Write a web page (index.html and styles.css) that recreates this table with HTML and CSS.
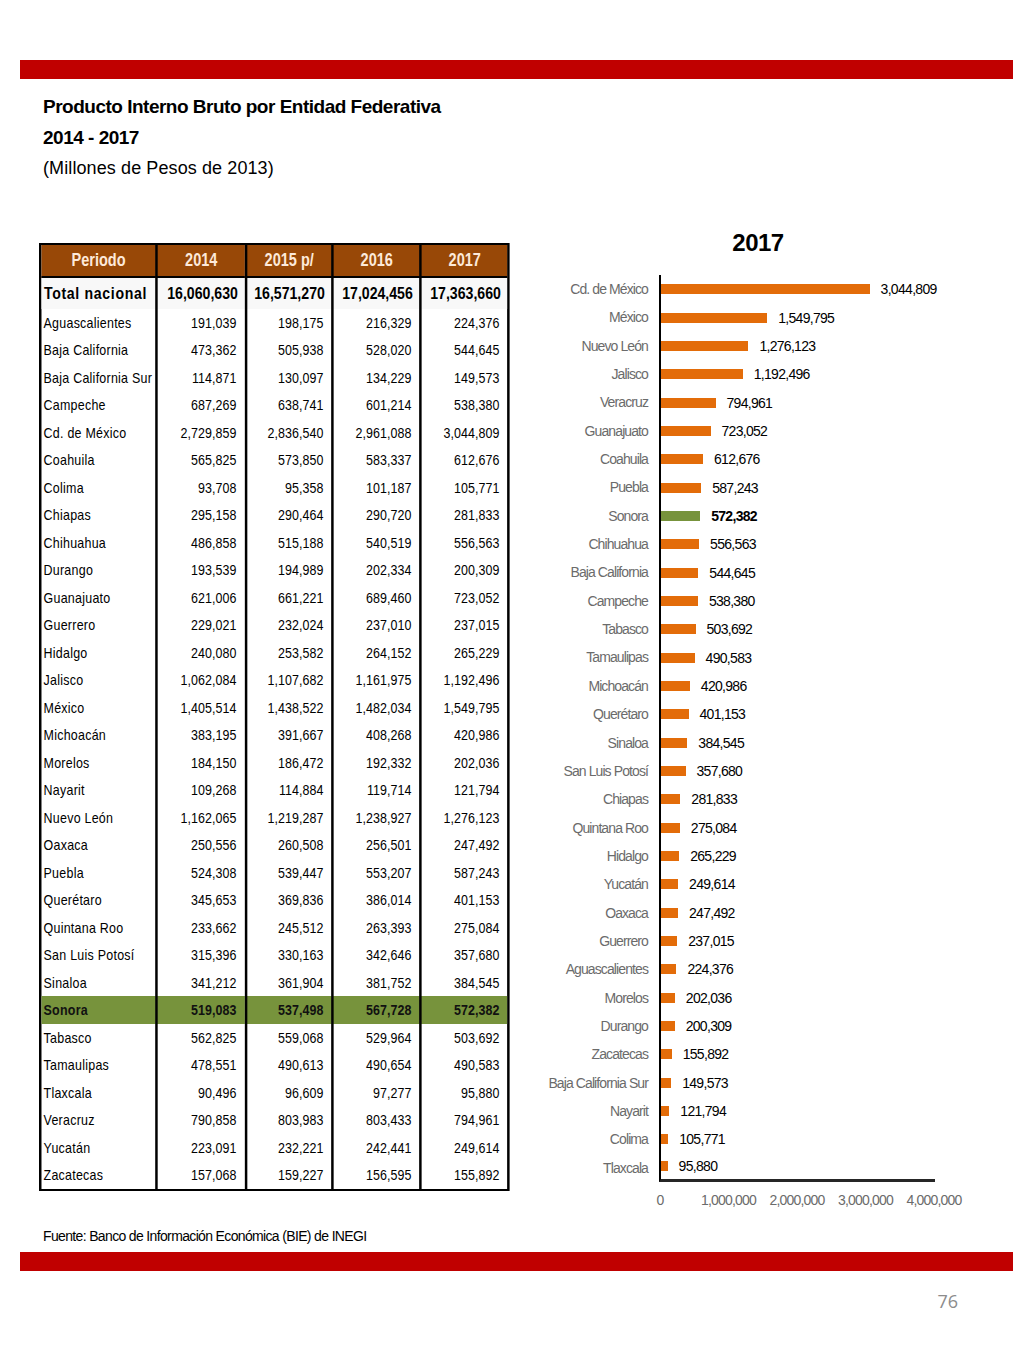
FILE: index.html
```html
<!DOCTYPE html>
<html lang="es">
<head>
<meta charset="utf-8">
<title>Producto Interno Bruto por Entidad Federativa</title>
<link rel="stylesheet" href="styles.css">
</head>
<body>
<div class="page">
  <div class="redbar"></div>
  <header class="head">
    <h1 class="t1">Producto Interno Bruto por Entidad Federativa</h1>
    <h2 class="t2">2014 - 2017</h2>
    <p class="t3">(Millones de Pesos de 2013)</p>
  </header>
  <main class="content">
    <div class="tbl-wrap">
    <table class="pib">
      <colgroup><col class="c0"><col class="c1"><col class="c2"><col class="c3"><col class="c4"></colgroup>
      <thead>
        <tr><th>Periodo</th><th>2014</th><th>2015 p/</th><th>2016</th><th>2017</th></tr>
      </thead>
      <tbody>
        <tr class="total"><td>Total nacional</td><td>16,060,630</td><td>16,571,270</td><td>17,024,456</td><td>17,363,660</td></tr>
        <tr><td>Aguascalientes</td><td>191,039</td><td>198,175</td><td>216,329</td><td>224,376</td></tr>
        <tr><td>Baja California</td><td>473,362</td><td>505,938</td><td>528,020</td><td>544,645</td></tr>
        <tr><td>Baja California Sur</td><td>114,871</td><td>130,097</td><td>134,229</td><td>149,573</td></tr>
        <tr><td>Campeche</td><td>687,269</td><td>638,741</td><td>601,214</td><td>538,380</td></tr>
        <tr><td>Cd. de México</td><td>2,729,859</td><td>2,836,540</td><td>2,961,088</td><td>3,044,809</td></tr>
        <tr><td>Coahuila</td><td>565,825</td><td>573,850</td><td>583,337</td><td>612,676</td></tr>
        <tr><td>Colima</td><td>93,708</td><td>95,358</td><td>101,187</td><td>105,771</td></tr>
        <tr><td>Chiapas</td><td>295,158</td><td>290,464</td><td>290,720</td><td>281,833</td></tr>
        <tr><td>Chihuahua</td><td>486,858</td><td>515,188</td><td>540,519</td><td>556,563</td></tr>
        <tr><td>Durango</td><td>193,539</td><td>194,989</td><td>202,334</td><td>200,309</td></tr>
        <tr><td>Guanajuato</td><td>621,006</td><td>661,221</td><td>689,460</td><td>723,052</td></tr>
        <tr><td>Guerrero</td><td>229,021</td><td>232,024</td><td>237,010</td><td>237,015</td></tr>
        <tr><td>Hidalgo</td><td>240,080</td><td>253,582</td><td>264,152</td><td>265,229</td></tr>
        <tr><td>Jalisco</td><td>1,062,084</td><td>1,107,682</td><td>1,161,975</td><td>1,192,496</td></tr>
        <tr><td>México</td><td>1,405,514</td><td>1,438,522</td><td>1,482,034</td><td>1,549,795</td></tr>
        <tr><td>Michoacán</td><td>383,195</td><td>391,667</td><td>408,268</td><td>420,986</td></tr>
        <tr><td>Morelos</td><td>184,150</td><td>186,472</td><td>192,332</td><td>202,036</td></tr>
        <tr><td>Nayarit</td><td>109,268</td><td>114,884</td><td>119,714</td><td>121,794</td></tr>
        <tr><td>Nuevo León</td><td>1,162,065</td><td>1,219,287</td><td>1,238,927</td><td>1,276,123</td></tr>
        <tr><td>Oaxaca</td><td>250,556</td><td>260,508</td><td>256,501</td><td>247,492</td></tr>
        <tr><td>Puebla</td><td>524,308</td><td>539,447</td><td>553,207</td><td>587,243</td></tr>
        <tr><td>Querétaro</td><td>345,653</td><td>369,836</td><td>386,014</td><td>401,153</td></tr>
        <tr><td>Quintana Roo</td><td>233,662</td><td>245,512</td><td>263,393</td><td>275,084</td></tr>
        <tr><td>San Luis Potosí</td><td>315,396</td><td>330,163</td><td>342,646</td><td>357,680</td></tr>
        <tr><td>Sinaloa</td><td>341,212</td><td>361,904</td><td>381,752</td><td>384,545</td></tr>
        <tr class="hl"><td>Sonora</td><td>519,083</td><td>537,498</td><td>567,728</td><td>572,382</td></tr>
        <tr><td>Tabasco</td><td>562,825</td><td>559,068</td><td>529,964</td><td>503,692</td></tr>
        <tr><td>Tamaulipas</td><td>478,551</td><td>490,613</td><td>490,654</td><td>490,583</td></tr>
        <tr><td>Tlaxcala</td><td>90,496</td><td>96,609</td><td>97,277</td><td>95,880</td></tr>
        <tr><td>Veracruz</td><td>790,858</td><td>803,983</td><td>803,433</td><td>794,961</td></tr>
        <tr><td>Yucatán</td><td>223,091</td><td>232,221</td><td>242,441</td><td>249,614</td></tr>
        <tr><td>Zacatecas</td><td>157,068</td><td>159,227</td><td>156,595</td><td>155,892</td></tr>
      </tbody>
    </table>
    </div>

    <section class="chart">
      <div class="chart-title">2017</div>
      <div class="plot">
        <div class="row"><span class="lbl">Cd. de México</span><span class="cell"><span class="bar" style="width:208.6px"></span><span class="val">3,044,809</span></span></div>
        <div class="row"><span class="lbl">México</span><span class="cell"><span class="bar" style="width:106.2px"></span><span class="val">1,549,795</span></span></div>
        <div class="row"><span class="lbl">Nuevo León</span><span class="cell"><span class="bar" style="width:87.4px"></span><span class="val">1,276,123</span></span></div>
        <div class="row"><span class="lbl">Jalisco</span><span class="cell"><span class="bar" style="width:81.7px"></span><span class="val">1,192,496</span></span></div>
        <div class="row"><span class="lbl">Veracruz</span><span class="cell"><span class="bar" style="width:54.5px"></span><span class="val">794,961</span></span></div>
        <div class="row"><span class="lbl">Guanajuato</span><span class="cell"><span class="bar" style="width:49.5px"></span><span class="val">723,052</span></span></div>
        <div class="row"><span class="lbl">Coahuila</span><span class="cell"><span class="bar" style="width:42.0px"></span><span class="val">612,676</span></span></div>
        <div class="row"><span class="lbl">Puebla</span><span class="cell"><span class="bar" style="width:40.2px"></span><span class="val">587,243</span></span></div>
        <div class="row hl"><span class="lbl">Sonora</span><span class="cell"><span class="bar" style="width:39.2px"></span><span class="val">572,382</span></span></div>
        <div class="row"><span class="lbl">Chihuahua</span><span class="cell"><span class="bar" style="width:38.1px"></span><span class="val">556,563</span></span></div>
        <div class="row"><span class="lbl">Baja California</span><span class="cell"><span class="bar" style="width:37.3px"></span><span class="val">544,645</span></span></div>
        <div class="row"><span class="lbl">Campeche</span><span class="cell"><span class="bar" style="width:36.9px"></span><span class="val">538,380</span></span></div>
        <div class="row"><span class="lbl">Tabasco</span><span class="cell"><span class="bar" style="width:34.5px"></span><span class="val">503,692</span></span></div>
        <div class="row"><span class="lbl">Tamaulipas</span><span class="cell"><span class="bar" style="width:33.6px"></span><span class="val">490,583</span></span></div>
        <div class="row"><span class="lbl">Michoacán</span><span class="cell"><span class="bar" style="width:28.8px"></span><span class="val">420,986</span></span></div>
        <div class="row"><span class="lbl">Querétaro</span><span class="cell"><span class="bar" style="width:27.5px"></span><span class="val">401,153</span></span></div>
        <div class="row"><span class="lbl">Sinaloa</span><span class="cell"><span class="bar" style="width:26.3px"></span><span class="val">384,545</span></span></div>
        <div class="row"><span class="lbl">San Luis Potosí</span><span class="cell"><span class="bar" style="width:24.5px"></span><span class="val">357,680</span></span></div>
        <div class="row"><span class="lbl">Chiapas</span><span class="cell"><span class="bar" style="width:19.3px"></span><span class="val">281,833</span></span></div>
        <div class="row"><span class="lbl">Quintana Roo</span><span class="cell"><span class="bar" style="width:18.8px"></span><span class="val">275,084</span></span></div>
        <div class="row"><span class="lbl">Hidalgo</span><span class="cell"><span class="bar" style="width:18.2px"></span><span class="val">265,229</span></span></div>
        <div class="row"><span class="lbl">Yucatán</span><span class="cell"><span class="bar" style="width:17.1px"></span><span class="val">249,614</span></span></div>
        <div class="row"><span class="lbl">Oaxaca</span><span class="cell"><span class="bar" style="width:17.0px"></span><span class="val">247,492</span></span></div>
        <div class="row"><span class="lbl">Guerrero</span><span class="cell"><span class="bar" style="width:16.2px"></span><span class="val">237,015</span></span></div>
        <div class="row"><span class="lbl">Aguascalientes</span><span class="cell"><span class="bar" style="width:15.4px"></span><span class="val">224,376</span></span></div>
        <div class="row"><span class="lbl">Morelos</span><span class="cell"><span class="bar" style="width:13.8px"></span><span class="val">202,036</span></span></div>
        <div class="row"><span class="lbl">Durango</span><span class="cell"><span class="bar" style="width:13.7px"></span><span class="val">200,309</span></span></div>
        <div class="row"><span class="lbl">Zacatecas</span><span class="cell"><span class="bar" style="width:10.7px"></span><span class="val">155,892</span></span></div>
        <div class="row"><span class="lbl">Baja California Sur</span><span class="cell"><span class="bar" style="width:10.2px"></span><span class="val">149,573</span></span></div>
        <div class="row"><span class="lbl">Nayarit</span><span class="cell"><span class="bar" style="width:8.3px"></span><span class="val">121,794</span></span></div>
        <div class="row"><span class="lbl">Colima</span><span class="cell"><span class="bar" style="width:7.2px"></span><span class="val">105,771</span></span></div>
        <div class="row last"><span class="lbl">Tlaxcala</span><span class="cell"><span class="bar" style="width:6.6px"></span><span class="val">95,880</span></span></div>
      </div>
      <div class="xaxis">
        <span>0</span><span>1,000,000</span><span>2,000,000</span><span>3,000,000</span><span>4,000,000</span>
      </div>
    </section>
  </main>
  <p class="source">Fuente: Banco de Información Económica (BIE) de INEGI</p>
  <div class="redbar"></div>
  <div class="pageno">76</div>
</div>
</body>
</html>
```

FILE: styles.css
```css
* { box-sizing: border-box; }
html, body { margin: 0; padding: 0; background: #fff; }
body {
  font-family: "Liberation Sans", Arial, sans-serif;
  color: #000;
}
.page { width: 1024px; height: 1365px; padding-top: 60px; }
.redbar { height: 19px; background: #c00000; margin: 0 11px 0 20px; }

.head { padding: 13px 0 0 43px; }
.t1, .t2 { margin: 0; font-size: 19px; font-weight: bold; line-height: 30.5px; letter-spacing: -0.5px; }
.t3 { margin: 0; font-size: 18px; font-weight: normal; line-height: 30.5px; letter-spacing: 0.1px; }

.content { display: flex; align-items: flex-start; margin-top: 59.5px; padding-left: 39px; }

/* table rendered with a horizontal squeeze to mimic a narrow face */
.tbl-wrap { width: 471px; flex: none; }
.pib {
  width: 561.5px;
  border-collapse: separate;
  border-spacing: 0;
  border-style: solid;
  border-color: #000;
  border-width: 2px 3px;
  table-layout: fixed;
  font-size: 15px;
  transform: scaleX(0.83);
  transform-origin: 0 0;
}
.c0 { width: 137.4px; }
.c1 { width: 107.2px; }
.c2 { width: 104.8px; }
.c3 { width: 106px; }
.c4 { width: 106.1px; }
.pib th {
  background: #984807;
  color: #fde9d9;
  font-size: 17.5px;
  font-weight: bold;
  height: 33px;
  padding: 0;
  text-align: center;
  border-bottom: 2px solid #000;
}
.pib th + th, .pib td + td { border-left: 3px solid #000; }
.pib td {
  padding: 0 9.5px 0 4px;
  text-align: right;
  white-space: nowrap;
  line-height: 18px;
  vertical-align: middle;
  letter-spacing: 0.1px;
}
.pib tbody tr:nth-child(even) td { height: 27px; }
.pib tbody tr:nth-child(odd) td { height: 28px; }
.pib td:first-child { text-align: left; padding-left: 2.5px; padding-right: 0; letter-spacing: 0.3px; }
.pib tbody tr.total td {
  height: 31px;
  font-size: 17px;
  font-weight: bold;
  padding-right: 8px;
  padding-left: 0;
  background: #f8f8f8;
  letter-spacing: 0;
}
.pib tbody tr.total td:first-child { padding-left: 3px; letter-spacing: 0.8px; }
.pib tr.hl td { background: #77933c; font-weight: bold; color: #111; }

.chart { width: 470px; }
.chart-title {
  font-size: 24px; font-weight: bold; text-align: center; letter-spacing: -0.5px;
  padding-left: 26px; line-height: 30px; margin-top: -15px; margin-bottom: 17px;
}
.row { display: flex; height: 28.35px; }
.lbl {
  width: 149px; flex: none; text-align: right; padding-right: 11px;
  color: #6b6b6b; font-size: 14px; line-height: 28px; white-space: nowrap; letter-spacing: -0.9px;
}
.cell {
  display: flex; align-items: center;
  border-left: 2px solid #000;
  width: 300px;
}
.row.last .cell { border-bottom: 3px solid #262626; width: 276px; }
.bar { height: 10px; background: #e36c09; display: block; flex: none; }
.row.hl .bar { background: #77933c; }
.val { margin-left: 11px; font-size: 14px; color: #000; white-space: nowrap; letter-spacing: -0.7px; }
.row.hl .val { font-weight: bold; }
.xaxis { display: flex; margin-left: 115.75px; margin-top: 10px; }
.xaxis span { width: 68.5px; flex: none; text-align: center; color: #6b6b6b; font-size: 14px; letter-spacing: -0.8px; line-height: 16px; }

.source { margin: 19px 0 7px 43px; font-size: 14px; line-height: 18px; letter-spacing: -0.65px; }
.pageno {
  text-align: right; padding-right: 66px; margin-top: 18px;
  font-family: "Open Sans", "Liberation Sans", sans-serif;
  font-size: 18px; color: #8c8c8c;
}
```
